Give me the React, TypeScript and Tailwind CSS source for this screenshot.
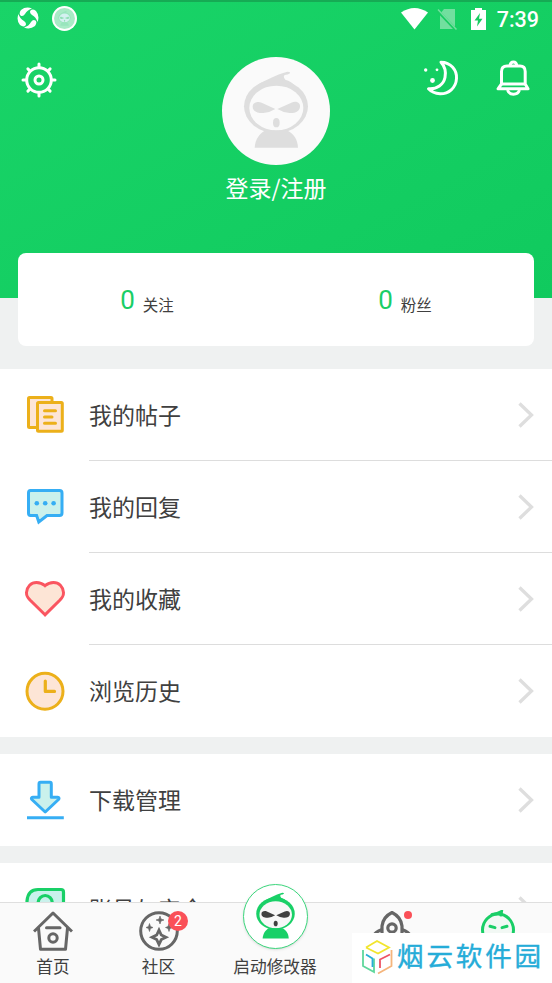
import React from 'react';

interface MascotProps {
  className: string;
  body: string;
  face: string;
  features: string;
}

const Mascot: React.FC<MascotProps> = ({ className, body, face, features }) => (
  <svg viewBox="0 0 324 324" className={className}>
    <path d="M84 104Q108 78 140 66Q172 50 196 44Q206 44 204 49Q198 54 188 54Q182 60 190 68Q208 72 222 90Z" fill={body} />
    <ellipse cx="162" cy="148" rx="96" ry="80" fill={body} />
    <ellipse cx="163" cy="153" rx="81" ry="67" fill={face} />
    <path d="M98 272C100 245 112 231 128 221H197C215 231 227 246 228 272Z" fill={body} />
    <path d="M160 156L119 137C106 132 92 137 92 149C92 163 108 169 124 168Q143 167 160 156Z" fill={features} />
    <path d="M166 156L208 137C221 131 235 136 234 149C233 163 219 169 203 168Q184 167 166 156Z" fill={features} />
    <ellipse cx="163" cy="197" rx="10" ry="14" fill={features} />
  </svg>
);

const PostsIcon = () => (
  <svg viewBox="0 0 44 44" className="size-11" stroke="#ecb01a" strokeWidth="3" strokeLinejoin="round" strokeLinecap="round">
    <rect x="5.5" y="4.5" width="23.5" height="30" rx="1" fill="#fde5d6" />
    <rect x="14.5" y="9.5" width="24.8" height="28.8" rx="1" fill="#fde5d6" />
    <path d="M21.5 17.7H32.5M21.5 24H29M21.5 30.3H32.5" fill="none" />
  </svg>
);

const RepliesIcon = () => (
  <svg viewBox="0 0 44 44" className="size-11">
    <path
      d="M7.5 5.5H36.5Q39 5.5 39 8V28Q39 30.5 36.5 30.5H24L15.8 37L13.6 30.5H7.5Q5.5 30.5 5.5 28V8Q5.5 5.5 7.5 5.5Z"
      fill="#caf1ec"
      stroke="#36aef4"
      strokeWidth="3"
    />
    <g fill="#36aef4">
      <circle cx="13.8" cy="18.2" r="2.3" />
      <circle cx="22.2" cy="18.2" r="2.3" />
      <circle cx="30.6" cy="18.2" r="2.3" />
    </g>
  </svg>
);

const HeartIcon = () => (
  <svg viewBox="0 0 44 44" className="size-11">
    <path
      d="M22 37.8L7 23C3.8 19.5 3.4 18.5 3.5 15.5C4 9.5 8 5.5 13.5 5.5C17 5.5 19.5 6.6 22 8.7C24.5 6.6 27 5.5 30.5 5.5C36 5.5 40 9.5 40.5 15.5C40.6 18.5 40.2 19.5 37 23Z"
      fill="#fde5d6"
      stroke="#fa5560"
      strokeWidth="3"
    />
  </svg>
);

const HistoryIcon = () => (
  <svg viewBox="0 0 44 44" className="size-11" stroke="#ecb01a" strokeWidth="3">
    <circle cx="22" cy="22.3" r="18" fill="#fde5d6" />
    <path d="M22.3 12V22.4H31.5" fill="none" strokeWidth="3.2" strokeLinecap="round" strokeLinejoin="round" />
  </svg>
);

const DownloadIcon = () => (
  <svg viewBox="0 0 44 44" className="size-11" stroke="#36aef4" strokeWidth="3" strokeLinejoin="round">
    <path d="M17.5 4.3H27Q28.3 4.3 28.3 6V19.3H34.5Q37 19.8 35.5 21.5L22.2 34L8.9 21.5Q7.4 19.8 10 19.3H16V6Q16 4.3 17.5 4.3Z" fill="#caf1ec" />
    <path d="M4 39.8H40.8" fill="none" />
  </svg>
);

const AccountIcon = () => (
  <svg viewBox="0 0 44 44" className="size-11" stroke="#19d067" strokeWidth="3.2">
    <path d="M4 40V14Q5 2.5 15 2.5H38Q40.5 2.5 40.5 5V40Z" fill="#caf1ec" />
    <circle cx="22.2" cy="15.5" r="7" fill="none" />
  </svg>
);

const menuGroups = [
  [
    { label: '我的帖子', icon: <PostsIcon /> },
    { label: '我的回复', icon: <RepliesIcon /> },
    { label: '我的收藏', icon: <HeartIcon /> },
    { label: '浏览历史', icon: <HistoryIcon /> },
  ],
  [{ label: '下载管理', icon: <DownloadIcon /> }],
  [{ label: '账号与安全', icon: <AccountIcon /> }],
];

const StatusBar = () => (
  <div className="flex h-[38px] items-center justify-between border-t-2 border-[#16ab54] pr-[13px] pl-[17px]">
    <div className="-mt-1 flex items-center gap-[13px]">
      <svg viewBox="0 0 22 22" className="size-[22px]" fill="#fff">
        <path d="M4 3Q9 -1 15 1.5Q10 3 8 7Q6 10 3.5 8.5Q1.5 6.5 4 3Z" />
        <path d="M19 4Q23 9 20.5 15Q19 10 15 8Q12 6 13.5 3.5Q15.5 1.5 19 4Z" />
        <path d="M18 19Q13 23 7 20.5Q12 19 14 15Q16 12 18.5 13.5Q20.5 15.5 18 19Z" />
        <path d="M3 18Q-1 13 1.5 7Q3 12 7 14Q10 16 8.5 18.5Q6.5 20.5 3 18Z" />
      </svg>
      <div className="flex size-[25px] items-center justify-center rounded-full bg-white">
        <div className="size-[21px] rounded-full bg-[#a8ebc6]">
          <Mascot className="size-[21px]" body="#98e5bd" face="#d4f1f0" features="#91dfb6" />
        </div>
      </div>
    </div>
    <div className="-mt-[3px] flex items-center">
      <svg viewBox="0 0 27 22" className="h-[22px] w-[27px]">
        <path d="M0 4.5Q13.5 -4.5 27 4.5L13.5 21.5Z" fill="#fff" />
      </svg>
      <svg viewBox="0 0 20 22" className="ml-[9px] h-[22px] w-[20px]">
        <path d="M7 1H18V21H3V6Z" fill="#72df9f" />
        <path d="M0 2L19 22" stroke="#18cc62" strokeWidth="3" />
        <path d="M1 1.5L19.5 21.5" stroke="#72df9f" strokeWidth="1.5" />
      </svg>
      <svg viewBox="0 0 15 22" className="ml-[14px] h-[22px] w-[15px]">
        <path d="M0 2H4V0H11V2H15V22H0Z" fill="#fff" />
        <path d="M9 5L3.5 12.5H7L6 18.5L11.5 10.8H8Z" fill="#16cc60" />
      </svg>
      <span className="ml-[11px] pt-[3px] font-['Roboto',sans-serif] text-[21.5px] leading-none font-medium text-white">7:39</span>
    </div>
  </div>
);

const GearIcon = () => (
  <svg viewBox="0 0 36 36" className="size-9" fill="none" stroke="#fff" strokeWidth="3" strokeLinecap="round">
    <circle cx="18" cy="18" r="12.3" />
    <circle cx="18" cy="18" r="4" />
    <path d="M18 2V5M18 31V34M2 18H5M31 18H34M6.9 6.9L9 9M27 27L29.1 29.1M29.1 6.9L27 9M9 27L6.9 29.1" />
  </svg>
);

const MoonIcon = () => (
  <svg viewBox="0 0 36 36" className="size-9">
    <path
      d="M18 2.2C28 2.2 34 10.5 33.5 18.5C33 28 25.5 34 17 33.8C12 33.5 8 31.5 5.5 28.8C14 29.5 20.5 24.5 22 17.5C23.2 11.5 21.5 6 18 2.2Z"
      fill="none"
      stroke="#fff"
      strokeWidth="3"
      strokeLinejoin="round"
    />
    <g fill="#fff">
      <circle cx="2.7" cy="10" r="1.7" />
      <circle cx="14" cy="9.8" r="1.4" />
      <circle cx="9.5" cy="20.5" r="2.4" />
    </g>
  </svg>
);

const BellIcon = () => (
  <svg viewBox="0 0 36 36" className="size-9" fill="none" stroke="#fff" strokeWidth="3" strokeLinejoin="round">
    <path d="M6.5 24V11.5Q6.5 6 12 6H25Q30.2 6 30.2 11.5V24L33 28.8H3Z" />
    <path d="M6 24H31" />
    <path d="M15 5.5Q15.5 2 18.4 2Q21.3 2 21.8 5.5M12.5 30Q14 34.2 18.5 34.2Q23 34.2 24.5 30" />
  </svg>
);

const Header = () => (
  <header className="h-[298px] bg-linear-to-br from-[#19d468] to-[#10ca5e]">
    <StatusBar />
    <div className="flex items-start justify-between pr-[21px] pl-[21px]">
      <button className="mt-[24px] w-[110px]">
        <GearIcon />
      </button>
      <div className="mt-[19px] flex flex-col items-center">
        <div className="size-[108px] rounded-full bg-[#fafafa]">
          <Mascot className="size-[108px]" body="#dedede" face="#fafafa" features="#dedede" />
        </div>
        <span className="mt-[5px] text-[23px] leading-[34px] text-white">登录/注册</span>
      </div>
      <div className="mt-[22px] flex w-[110px] justify-end gap-9">
        <MoonIcon />
        <BellIcon />
      </div>
    </div>
  </header>
);

const stats = [
  { count: 0, label: '关注' },
  { count: 0, label: '粉丝' },
];

const StatsCard = () => (
  <div className="relative mx-[18px] -mt-[45px] flex h-[93px] items-center rounded-lg bg-white">
    {stats.map(stat => (
      <div key={stat.label} className="flex flex-1 items-center justify-center gap-2">
        <span className="font-['Roboto',sans-serif] text-[26px] leading-none text-[#19ce66]">{stat.count}</span>
        <span className="pt-[11px] text-[15.5px] leading-none text-[#404040]">{stat.label}</span>
      </div>
    ))}
  </div>
);

const Menu = () => (
  <div className="mt-[23px] flex flex-col gap-[17px]">
    {menuGroups.map((group, index) => (
      <div key={index} className="bg-white">
        {group.map((item, i) => (
          <div key={item.label} className="flex h-[92px] items-center pl-[23px]">
            {item.icon}
            <div
              className={`ml-[22px] flex h-full flex-1 items-center justify-between border-b pr-[18px] ${
                i < group.length - 1 ? 'border-[#dddddd]' : 'border-transparent'
              }`}
            >
              <span className="text-[23px] leading-none text-[#404040]">{item.label}</span>
              <svg viewBox="0 0 16 28" className="h-7 w-4" fill="none" stroke="#dedede" strokeWidth="3.3">
                <path d="M1.5 2.5L13.5 14L1.5 25.5" />
              </svg>
            </div>
          </div>
        ))}
      </div>
    ))}
  </div>
);

const HomeIcon = () => (
  <svg viewBox="0 0 40 40" className="size-10" fill="none" stroke="#666" strokeWidth="3" strokeLinejoin="round">
    <path d="M1 20.5L20 2L39 20.5M5.5 17L7.5 38.3H32.5L34.5 17" />
    <path d="M13.5 16.7H27" strokeLinecap="round" />
    <circle cx="20" cy="27" r="4.2" />
  </svg>
);

const CommunityIcon = () => (
  <svg viewBox="0 0 40 40" className="size-10" fill="none" stroke="#666">
    <circle cx="20" cy="20" r="18.3" strokeWidth="3" />
    <path d="M20 19L22.3 24L27 26.3L22.3 28.6L20 33.5L17.7 28.6L13 26.3L17.7 24Z" strokeWidth="2.8" />
    <path
      d="M21 5L22 8L25 9L22 10L21 13L20 10L17 9L20 8ZM10.5 12.5L11.5 15.5L14 16.5L11.5 17.5L10.5 20.5L9.5 17.5L7 16.5L9.5 15.5ZM30 12.5L31 15.5L33.5 16.5L31 17.5L30 20.5L29 17.5L26.5 16.5L29 15.5Z"
      fill="#666"
      strokeWidth="0.6"
    />
  </svg>
);

const RocketIcon = () => (
  <svg viewBox="0 0 40 40" className="size-10" fill="none" stroke="#666" strokeWidth="3.2">
    <path d="M10 30V15Q11 6 20 1.5Q29 6 30 15V30" />
    <circle cx="20" cy="17" r="4.2" />
    <path d="M10 18.5Q3 21 1.5 25M30 18.5Q37 21 38.5 25" />
  </svg>
);

const ProfileIcon = () => (
  <svg viewBox="0 0 40 40" className="size-10" stroke="#19ce66" strokeWidth="3" strokeLinecap="round">
    <ellipse cx="20" cy="20" rx="15.5" ry="16" fill="#f2f8f4" />
    <path d="M14 4.5Q20 4 23.5 1.5L23 5" fill="none" />
    <path d="M12 16.3L17 17.6M29 16.3L24 17.6" />
  </svg>
);

const Watermark = () => (
  <div className="absolute right-0 bottom-0 flex h-[50px] w-[200px] items-center bg-white pl-[9px]">
    <svg viewBox="0 0 34 38" className="h-[38px] w-[34px] shrink-0" fill="none" strokeWidth="1.8">
      <path d="M5 8.5L16 2L28 8.5L17 14.5L5 8.5" stroke="#f2e52e" />
      <path d="M2 11V27L13 33V19.5" stroke="#5fd79c" />
      <path d="M5 15.5L11.5 19.5V28" stroke="#28aed6" />
      <path d="M30.5 11V27L17 34.5" stroke="#f5b57c" />
      <path d="M29 15.5L19 20.5V29" stroke="#ee5363" />
    </svg>
    <span className="ml-[2px] pb-[5px] text-[26.5px] leading-none tracking-[2.9px] whitespace-nowrap text-[#25acd8] [-webkit-text-stroke:0.4px_#25acd8]">
      烟云软件园
    </span>
  </div>
);

const NavBar = () => (
  <nav className="relative flex h-[81px] shrink-0 border-t border-[#dfdfdf] bg-[#fafafa] text-[16.7px] leading-none text-[#404040]">
    <div className="flex w-[106px] flex-col items-center gap-[7px] pt-2">
      <HomeIcon />
      <span>首页</span>
    </div>
    <div className="relative flex w-[105px] flex-col items-center gap-[7px] pt-2">
      <CommunityIcon />
      <span>社区</span>
      <span className="absolute top-2 left-[62px] flex size-5 items-center justify-center rounded-full bg-[#fa5058] font-['Roboto',sans-serif] text-[14px] text-white">
        2
      </span>
    </div>
    <div className="flex w-[128px] flex-col items-center gap-[7px]">
      <div className="-mt-[19px] flex size-[65px] items-center justify-center rounded-full border-[1.5px] border-[#3cd77d] bg-white shadow-sm">
        <Mascot className="size-[65px] shrink-0" body="#19d067" face="#f7f7f7" features="#404040" />
      </div>
      <span className="mt-[2px]">启动修改器</span>
    </div>
    <div className="relative flex w-[105px] flex-col items-center pt-2">
      <RocketIcon />
      <span className="absolute top-2 left-[65px] size-2 rounded-full bg-[#fa5058]" />
    </div>
    <div className="flex flex-1 flex-col items-center pt-[7px]">
      <ProfileIcon />
    </div>
    <Watermark />
  </nav>
);

export default function App() {
  return (
    <div className="flex h-[983px] w-[552px] flex-col overflow-hidden bg-[#eff1f1] font-['Noto_Sans_CJK_SC',sans-serif]">
      <main className="min-h-0 flex-1 overflow-hidden">
        <Header />
        <StatsCard />
        <Menu />
      </main>
      <NavBar />
    </div>
  );
}
